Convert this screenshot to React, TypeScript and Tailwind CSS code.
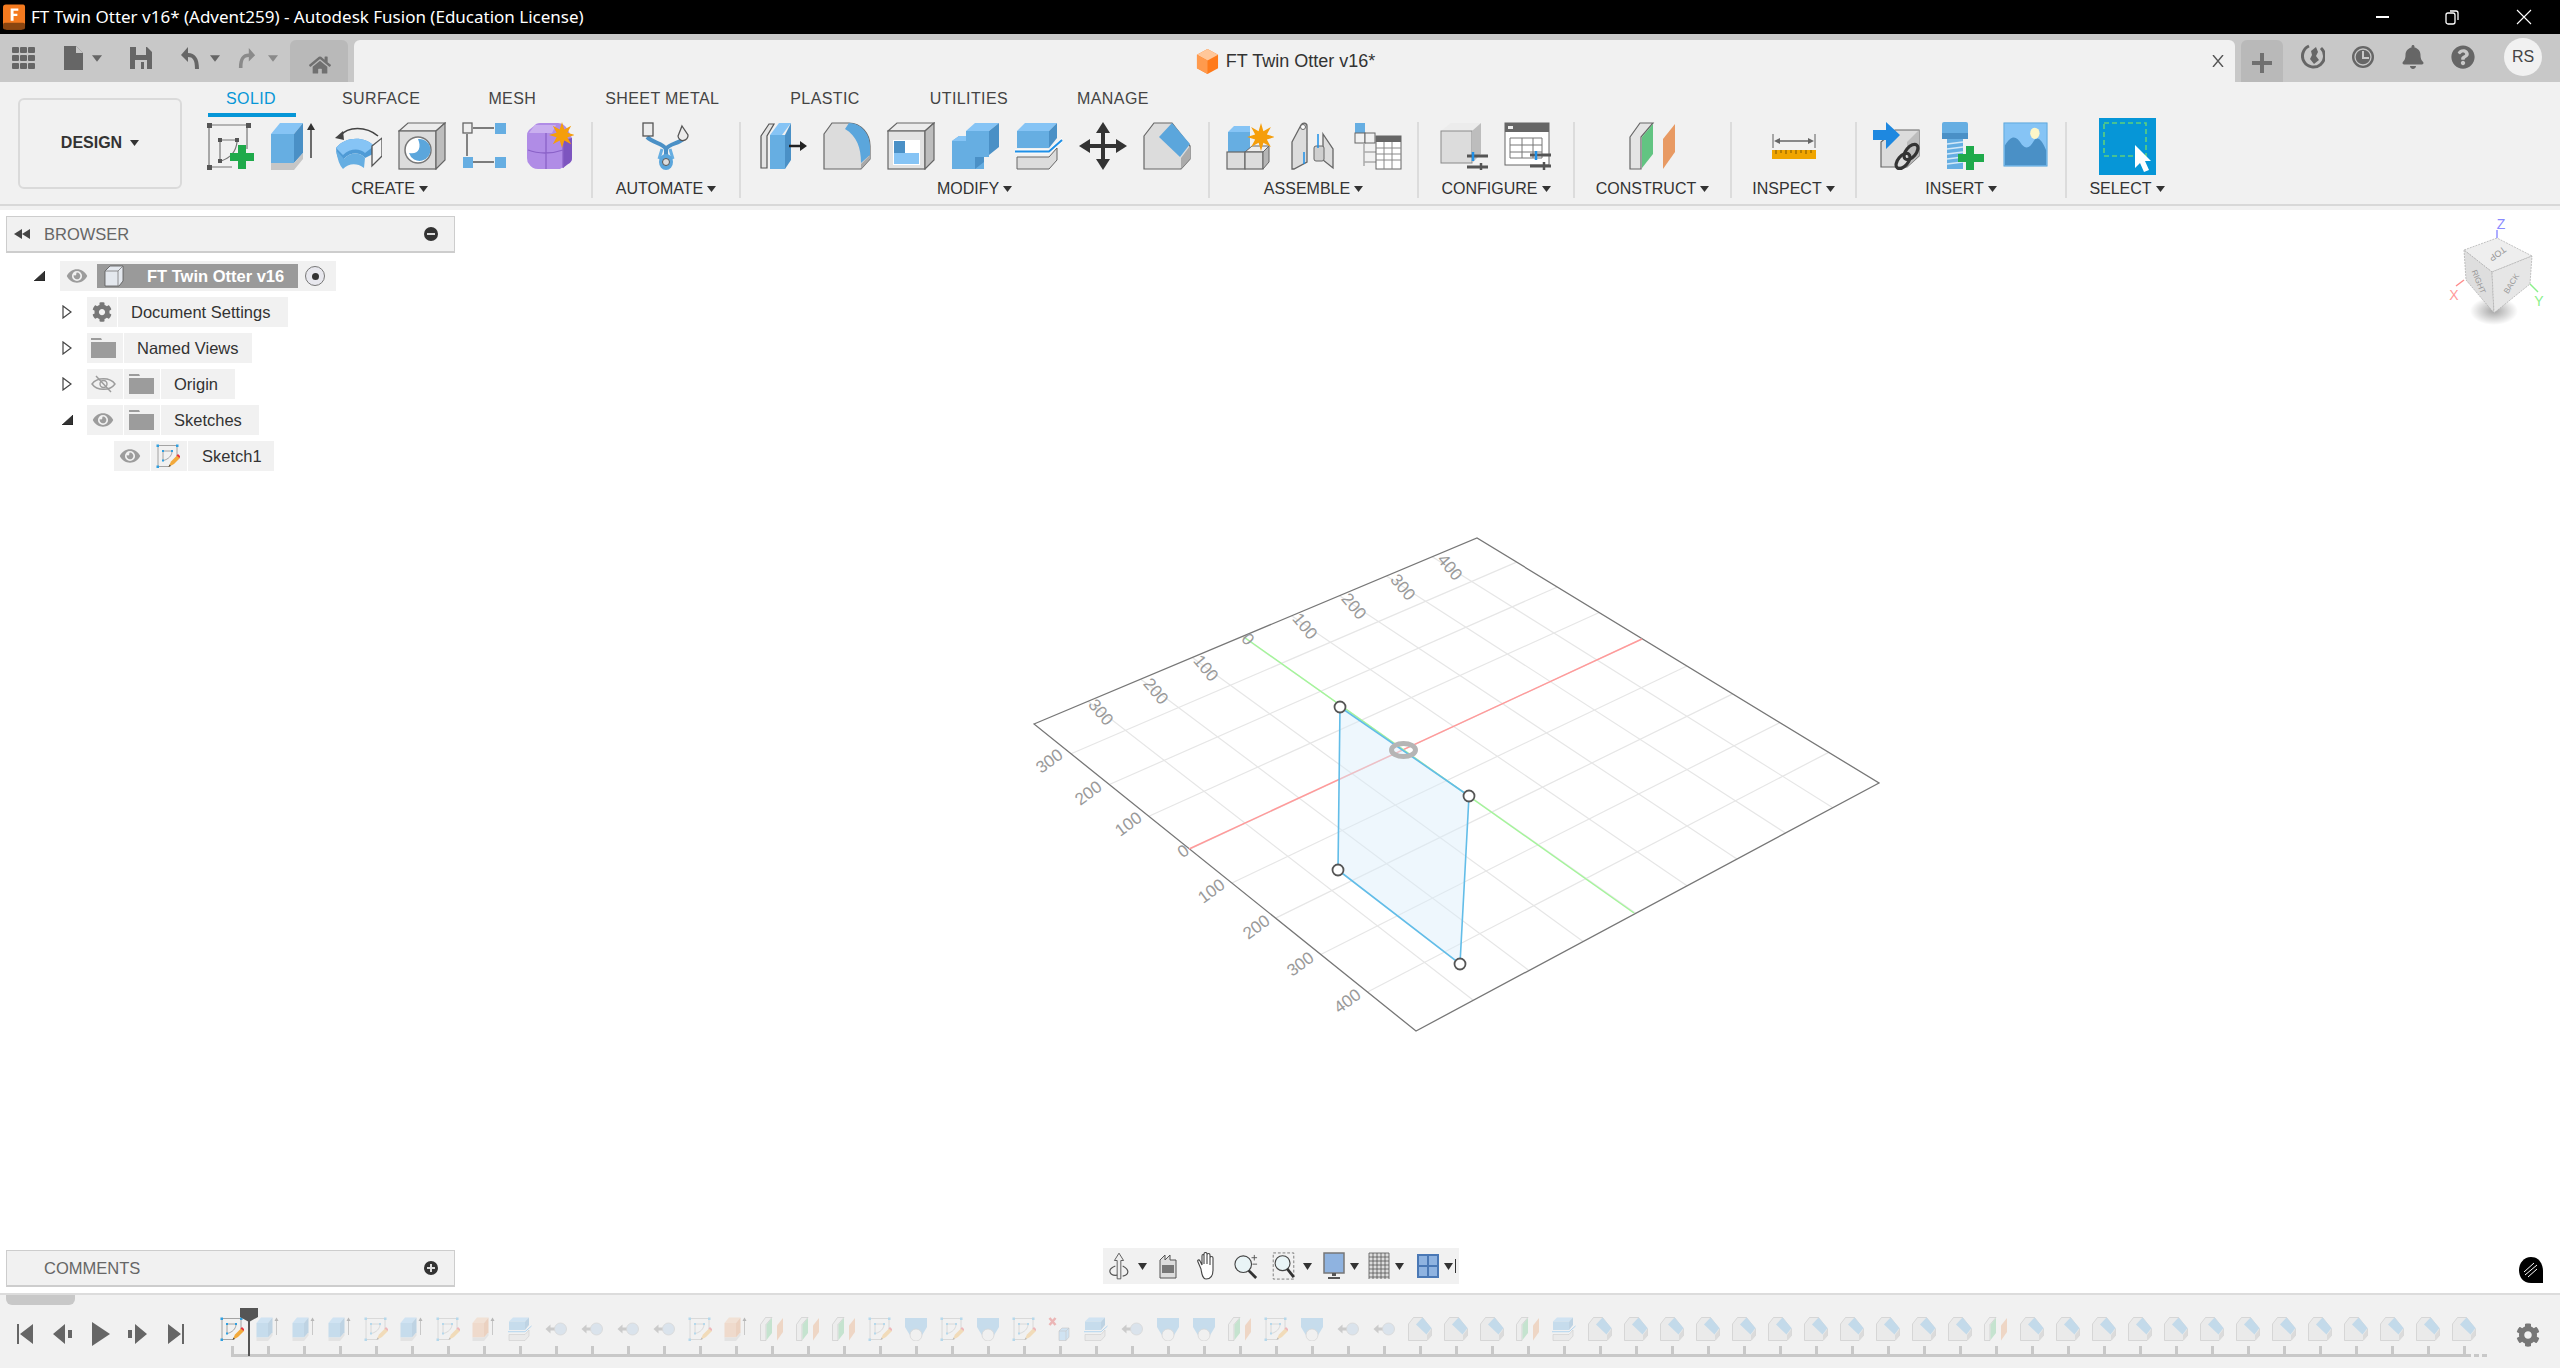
import type { ReactNode } from "react"
import { FaBell, FaCog, FaEye, FaHome, FaQuestionCircle } from "react-icons/fa"

type IconProps = { className?: string }

// all ribbon icons are drawn on a 48 box
function Ico({ className = "w-12 h-12", children }: IconProps & { children: ReactNode }) {
  return (
    <svg viewBox="0 0 48 48" className={className}>
      {children}
    </svg>
  )
}

function Caret() {
  return (
    <svg viewBox="0 0 9 6" className="w-[9px] h-[6px] shrink-0">
      <polygon points="0,0 9,0 4.5,6" fill="#333" />
    </svg>
  )
}

function SketchAdd({ className }: IconProps) {
  return (
    <Ico className={className}>
      <g stroke="#777" strokeWidth="1.2" fill="none">
        <path d="M4 3H41M3 4V44M5 45H26M41 5V27" />
        <path d="M14 18H31M14 20V38M31 20C30 30 24 36 15 39" />
      </g>
      <g fill="#555">
        <rect x="1" y="1" width="5" height="5" />
        <rect x="40" y="1" width="5" height="5" />
        <rect x="1" y="43" width="5" height="5" />
        <rect x="12" y="16" width="4" height="4" />
        <rect x="29" y="16" width="4" height="4" />
        <rect x="12" y="37" width="4" height="4" />
      </g>
      <path d="M33 26h8v8h8v8h-8v8h-8v-8h-8v-8h8z" fill="#1faa4b" transform="translate(-1 -3)" />
    </Ico>
  )
}

function SketchPencil({ className }: IconProps) {
  return (
    <Ico className={className}>
      <g stroke="#8a8a8a" strokeWidth="1.5" fill="none">
        <path d="M5 3H42M4 4V44M5 45H26M42 5V26" />
        <path d="M14 14H32M14 16V32M32 16C31 24 25 30 15 33" />
      </g>
      <g fill="#2f9fe0">
        <rect x="1" y="1" width="5" height="5" />
        <rect x="40" y="1" width="5" height="5" />
        <rect x="1" y="43" width="5" height="5" />
        <rect x="12" y="12" width="4" height="4" />
        <rect x="30" y="12" width="4" height="4" />
        <rect x="12" y="31" width="4" height="4" />
      </g>
      <path d="M25 46l5-11 12-12 6 5-12 12z" fill="#f2a93b" />
      <path d="M41 23l3-3 5 5-2 3z" fill="#e8323c" />
      <path d="M25 46l2-5 3 3z" fill="#444" />
    </Ico>
  )
}

function Extrude({ className, front = "#66aee2", top = "#86c4f5", side = "#4a90c6" }: IconProps & { front?: string; top?: string; side?: string }) {
  return (
    <Ico className={className}>
      <polygon points="1,12 24,12 33,1 10,1" fill={top} />
      <rect x="1" y="12" width="23" height="29" fill={front} />
      <polygon points="24,12 33,1 33,31 24,41" fill={side} />
      <polygon points="1,41 24,41 33,31 33,37 24,48 1,48" fill="#c6c6c6" />
      <path d="M41 36V5" stroke="#333" strokeWidth="1.4" />
      <polygon points="41,1 45,8 37,8" fill="#333" />
    </Ico>
  )
}

function Revolve({ className }: IconProps) {
  return (
    <Ico className={className}>
      <path d="M6 14C14 4 32 4 44 14" stroke="#444" strokeWidth="1.6" fill="none" />
      <polygon points="1,16 9,9 10,18" fill="#444" />
      <path d="M2 26C10 15 30 13 40 24L42 20 39 32 31 36C26 30 16 30 10 37 L5 38 Q2 32 2 26z" fill="#4f9bd6" />
      <path d="M2 26C10 15 30 13 40 24L31 31C26 26 16 26 9 33z" fill="#86c4f5" />
      <path d="M10 37C16 30 26 30 31 36L30 46C22 40 14 42 9 47Q4 42 2 28z" fill="#66aee2" />
      <polygon points="38,24 48,16 48,34 38,44" fill="#f4f4f4" stroke="#555" strokeWidth="1.3" />
    </Ico>
  )
}

function Hole({ className }: IconProps) {
  return (
    <Ico className={className}>
      <polygon points="1,9 10,1 47,1 38,9" fill="#ececec" stroke="#666" strokeWidth="1.2" />
      <rect x="1" y="9" width="37" height="38" fill="#dcdcdc" stroke="#666" strokeWidth="1.2" />
      <polygon points="38,9 47,1 47,38 38,47" fill="#bdbdbd" stroke="#666" strokeWidth="1.2" />
      <circle cx="20" cy="28" r="13" fill="#fff" stroke="#777" strokeWidth="1.5" />
      <path d="M20 17A11 11 0 1 1 11 31C20 33 24 26 20 17z" fill="#5ba6dc" />
    </Ico>
  )
}

function Pattern({ className }: IconProps) {
  return (
    <Ico className={className}>
      <path d="M11 6H32M5 12V34M11 40H32" stroke="#555" strokeWidth="1.4" />
      <rect x="1" y="1" width="9" height="10" fill="#eee" stroke="#666" strokeWidth="1.3" />
      <rect x="33" y="1" width="11" height="11" fill="#66aee2" />
      <rect x="1" y="35" width="10" height="11" fill="#66aee2" />
      <rect x="33" y="35" width="11" height="11" fill="#66aee2" />
    </Ico>
  )
}

function Star({ cx, cy, r }: { cx: number; cy: number; r: number }) {
  const pts = Array.from({ length: 16 }, (_, i) => {
    const a = (i * Math.PI) / 8
    const q = i % 2 === 0 ? r : r * 0.45
    return `${cx + q * Math.sin(a)},${cy - q * Math.cos(a)}`
  }).join(" ")
  return <polygon points={pts} fill="#f59e0b" />
}

function Form({ className }: IconProps) {
  return (
    <Ico className={className}>
      <path d="M8 4Q10 1 14 1H32Q38 1 42 8L46 16V36Q46 40 42 42L34 47H12Q6 47 3 42Q1 40 1 36V14Q1 10 3 8z" fill="#b08ce6" />
      <path d="M9 3H30L26 11H3z" fill="#c9afef" />
      <path d="M37 18L46 16V36Q46 40 42 42L37 46z" fill="#7d55bf" />
      <path d="M2 28C12 32 26 32 37 28M20 11V47M37 18V46" stroke="#8a62c8" strokeWidth="1.3" fill="none" />
      <Star cx={36} cy={13} r={13} />
    </Ico>
  )
}

function Automate({ className }: IconProps) {
  return (
    <Ico className={className}>
      <path d="M5 15C12 22 20 20 24 27L24 35M41 17C36 22 28 21 24 27" stroke="#4a90c6" strokeWidth="4" fill="none" />
      <path d="M20 27L17 37M28 27L31 37" stroke="#66aee2" strokeWidth="3" />
      <rect x="1" y="1" width="10" height="13" fill="#ececec" stroke="#555" strokeWidth="1.3" />
      <path d="M40 4L46 13A5 5 0 1 1 36 14z" fill="#ececec" stroke="#555" strokeWidth="1.3" />
      <ellipse cx="24" cy="40" rx="7" ry="8" fill="#5ba6dc" />
      <circle cx="24" cy="40" r="3.5" fill="#ddd" stroke="#555" />
    </Ico>
  )
}

function PressPull({ className }: IconProps) {
  return (
    <Ico className={className}>
      <polygon points="2,14 10,2 15,2 8,14 8,46 2,46" fill="#e4e4e4" stroke="#555" strokeWidth="1.2" />
      <polygon points="11,13 20,1 32,1 23,13" fill="#86c4f5" />
      <rect x="11" y="13" width="15" height="34" fill="#66aee2" />
      <polygon points="26,13 32,1 32,38 26,47" fill="#4a90c6" />
      <path d="M30 24H43" stroke="#222" strokeWidth="2.5" />
      <polygon points="48,24 41,19 41,29" fill="#222" />
    </Ico>
  )
}

function Fillet({ className }: IconProps) {
  return (
    <Ico className={className}>
      <path d="M1 12L9 1H26C38 1 47 12 47 24V37L38 47H1z" fill="#dcdcdc" stroke="#666" strokeWidth="1.2" />
      <path d="M26 1C38 1 47 12 47 24V33L38 41C38 26 34 14 22 7z" fill="#5ba6dc" />
      <path d="M38 42L47 33V37L38 47z" fill="#a9a9a9" />
    </Ico>
  )
}

function Shell({ className }: IconProps) {
  return (
    <Ico className={className}>
      <polygon points="1,9 10,1 47,1 38,9" fill="#ececec" stroke="#666" strokeWidth="1.2" />
      <rect x="1" y="9" width="37" height="38" fill="#e2e2e2" stroke="#666" strokeWidth="1.2" />
      <polygon points="38,9 47,1 47,38 38,47" fill="#bdbdbd" stroke="#666" strokeWidth="1.2" />
      <rect x="6" y="18" width="27" height="25" fill="#fff" />
      <rect x="7" y="19" width="11" height="23" fill="#4a90c6" />
      <rect x="7" y="31" width="25" height="11" fill="#86c4f5" />
    </Ico>
  )
}

function Combine({ className }: IconProps) {
  return (
    <Ico className={className}>
      <polygon points="1,19 8,14 24,14 24,47 1,47" fill="#66aee2" />
      <polygon points="1,19 8,14 18,14 15,19" fill="#86c4f5" />
      <polygon points="15,9 24,1 48,1 38,9" fill="#86c4f5" />
      <rect x="15" y="9" width="23" height="26" fill="#66aee2" />
      <rect x="15" y="30" width="18" height="17" fill="#66aee2" />
      <polygon points="38,9 48,1 48,25 38,33" fill="#4a90c6" />
      <polygon points="24,35 33,35 33,40 24,47" fill="#4a90c6" />
    </Ico>
  )
}

function Split({ className }: IconProps) {
  return (
    <Ico className={className}>
      <polygon points="2,9 10,1 42,1 34,9" fill="#86c4f5" />
      <rect x="2" y="9" width="32" height="17" fill="#66aee2" />
      <polygon points="34,9 42,1 42,16 34,26" fill="#4a90c6" />
      <path d="M0 28H34L47 16M0 31H34L47 20" stroke="#fff" strokeWidth="1" fill="none" />
      <path d="M0 29.5H34L47 18" stroke="#1e90e8" strokeWidth="2" fill="none" />
      <polygon points="2,35 34,35 42,26 42,38 34,47 2,47" fill="#dcdcdc" stroke="#666" strokeWidth="1" />
    </Ico>
  )
}

function Move({ className }: IconProps) {
  return (
    <Ico className={className}>
      <path d="M24 6V42M6 24H42" stroke="#333" strokeWidth="4" />
      <polygon points="24,0 31,11 17,11" fill="#333" />
      <polygon points="24,48 31,37 17,37" fill="#333" />
      <polygon points="0,24 11,17 11,31" fill="#333" />
      <polygon points="48,24 37,17 37,31" fill="#333" />
    </Ico>
  )
}

function Chamfer({ className }: IconProps) {
  return (
    <Ico className={className}>
      <polygon points="1,14 11,1 29,1 47,24 47,37 38,47 1,47" fill="#dcdcdc" stroke="#666" strokeWidth="1.2" />
      <polygon points="38,36 47,24 47,37 38,47" fill="#ababab" />
      <polygon points="16,15 29,1 47,22 37,35" fill="#5ba6dc" />
    </Ico>
  )
}

function NewComponent({ className }: IconProps) {
  return (
    <Ico className={className}>
      <polygon points="2,10 8,4 24,4 24,10" fill="#86c4f5" />
      <rect x="2" y="10" width="22" height="20" fill="#66aee2" />
      <rect x="1" y="30" width="18" height="17" fill="#dcdcdc" stroke="#666" strokeWidth="1.2" />
      <polygon points="19,30 26,24 43,24 37,30" fill="#eee" stroke="#666" />
      <rect x="19" y="30" width="18" height="17" fill="#dcdcdc" stroke="#666" strokeWidth="1.2" />
      <polygon points="37,30 43,24 43,40 37,47" fill="#b5b5b5" stroke="#666" />
      <Star cx={35} cy={15} r={14} />
    </Ico>
  )
}

function Joint({ className }: IconProps) {
  return (
    <Ico className={className}>
      <path d="M2 20L11 3C13 0 17 1 17 4V40L4 47H2z" fill="#dcdcdc" stroke="#666" strokeWidth="1.3" />
      <path d="M33 12L43 27V46L33 38z" fill="#dcdcdc" stroke="#666" strokeWidth="1.3" />
      <rect x="24" y="24" width="10" height="15" rx="2" fill="#cfcfcf" stroke="#666" />
      <circle cx="13" cy="5" r="2.5" fill="#fff" stroke="#666" />
      <path d="M28 12V26M14 30V42" stroke="#1e90e8" strokeWidth="1.5" />
    </Ico>
  )
}

function Bom({ className }: IconProps) {
  return (
    <Ico className={className}>
      <rect x="1" y="1" width="10" height="10" fill="#66aee2" />
      <rect x="1" y="11" width="10" height="10" fill="#f1f1f1" stroke="#666" />
      <rect x="11" y="11" width="10" height="10" fill="#f1f1f1" stroke="#666" />
      <path d="M10 21V44M10 30H22M10 40H22" stroke="#aaa" strokeWidth="1.5" fill="none" />
      <rect x="22" y="14" width="25" height="33" fill="#fff" stroke="#666" />
      <rect x="22" y="14" width="25" height="6" fill="#666" />
      <path d="M22 26H47M22 32H47M22 38H47M30 20V47M38 20V47" stroke="#888" strokeWidth="1" />
    </Ico>
  )
}

function Sliders({ x, y }: { x: number; y: number }) {
  return (
    <g transform={`translate(${x} ${y})`}>
      <path d="M0 4H21M0 15H21" stroke="#555" strokeWidth="3" />
      <path d="M6 0V9" stroke="#1e90e8" strokeWidth="2.5" />
      <path d="M14 11V20" stroke="#555" strokeWidth="2.5" />
    </g>
  )
}

function ConfigureBox({ className }: IconProps) {
  return (
    <Ico className={className}>
      <polygon points="1,9 11,1 41,1 41,9" fill="#ececec" />
      <rect x="1" y="9" width="31" height="32" fill="#dcdcdc" stroke="#8a8a8a" />
      <polygon points="32,9 41,1 41,32 32,41" fill="#bdbdbd" />
      <Sliders x={27} y={30} />
    </Ico>
  )
}

function ConfigureTable({ className }: IconProps) {
  return (
    <Ico className={className}>
      <rect x="1" y="1" width="44" height="42" fill="#fff" stroke="#666" />
      <rect x="1" y="1" width="44" height="9" fill="#666" />
      <rect x="4" y="4" width="5" height="3" fill="#eee" />
      <path d="M6 16H38V36H6zM6 23H38M6 30H38M18 16V36M29 16V36" stroke="#777" fill="none" />
      <Sliders x={26} y={29} />
    </Ico>
  )
}

function Plane({ className }: IconProps) {
  return (
    <Ico className={className}>
      <polygon points="1,15 11,1 24,1 12,15 12,47 1,47" fill="#e4e4e4" stroke="#666" strokeWidth="1.2" />
      <polygon points="13,15 24,2 24,32 13,46" fill="#62c482" />
      <polygon points="34,17 46,2 46,30 34,47" fill="#e89a63" />
    </Ico>
  )
}

function Measure({ className }: IconProps) {
  return (
    <svg viewBox="0 0 44 26" className={className}>
      <path d="M1 0V14M43 0V14" stroke="#777" strokeWidth="1.2" />
      <path d="M5 7H39" stroke="#666" strokeWidth="1.4" />
      <polygon points="2,7 8,4 8,10" fill="#666" />
      <polygon points="42,7 36,4 36,10" fill="#666" />
      <rect x="0" y="16" width="44" height="9" fill="#f0a500" />
      <path d="M4 16v4M9 16v3M14 16v4M19 16v3M24 16v4M29 16v3M34 16v4M39 16v3" stroke="#7a5200" strokeWidth="1" />
    </svg>
  )
}

function Derive({ className }: IconProps) {
  return (
    <Ico className={className}>
      <polygon points="8,20 8,45 34,45 46,34 46,8 22,8" fill="#dcdcdc" stroke="#666" strokeWidth="1.2" />
      <polygon points="34,20 46,8 46,34 34,45" fill="#bdbdbd" />
      <polygon points="0,8 13,8 13,0 27,13 13,27 13,18 0,18" fill="#1e88e0" />
      <g fill="none" stroke="#333" strokeWidth="3.2">
        <ellipse cx="38" cy="30" rx="5" ry="9" transform="rotate(40 38 30)" />
        <ellipse cx="30" cy="39" rx="5" ry="9" transform="rotate(40 30 39)" />
      </g>
    </Ico>
  )
}

function Bolt({ className }: IconProps) {
  return (
    <Ico className={className}>
      <rect x="5" y="0" width="26" height="17" rx="2" fill="#66aee2" />
      <rect x="5" y="11" width="26" height="6" fill="#4a90c6" />
      <rect x="10" y="17" width="16" height="30" fill="#66aee2" />
      <path d="M10 22L26 20M10 27L26 25M10 32L26 30M10 37L26 35M10 42L26 40" stroke="#d3e9f8" strokeWidth="1.5" />
      <path d="M29 24h8v8h10v8h-10v8h-8v-8h-8v-8h8z" fill="#1faa4b" />
    </Ico>
  )
}

function ImageIcon({ className }: IconProps) {
  return (
    <Ico className={className}>
      <rect x="1" y="1" width="46" height="46" fill="#86c4f5" stroke="#5ba6dc" />
      <path d="M2 46V25C9 14 14 14 20 24C25 30 29 27 33 20C37 14 42 20 46 30V46z" fill="#4a90c6" />
      <ellipse cx="34" cy="12" rx="5" ry="6" fill="#fdf6c8" />
    </Ico>
  )
}

function SelectIcon({ className }: IconProps) {
  return (
    <svg viewBox="0 0 57 57" className={className}>
      <rect width="57" height="57" fill="#0696d7" />
      <rect x="5" y="5" width="42" height="33" fill="none" stroke="#5fd07c" strokeWidth="1.6" strokeDasharray="5 3" />
      <path d="M36 27V50L41 45 45 54 50 52 46 43H52z" fill="#fff" />
    </svg>
  )
}

function ArrowCircle({ className }: IconProps) {
  return (
    <Ico className={className}>
      <polygon points="3,24 13,15 13,21 25,21 25,27 13,27 13,33" fill="#777" />
      <circle cx="33" cy="24" r="12" fill="#a8c6e3" stroke="#999" strokeWidth="1.5" />
    </Ico>
  )
}

function Loft({ className }: IconProps) {
  return (
    <Ico className={className}>
      <polygon points="2,2 46,2 46,20 34,40 14,40 2,20" fill="#66aee2" />
      <ellipse cx="24" cy="36" rx="12" ry="12" fill="#eee" stroke="#999" strokeWidth="1.5" />
    </Ico>
  )
}

function DeleteBody({ className }: IconProps) {
  return (
    <Ico className={className}>
      <path d="M3 2L15 16M15 2L3 16" stroke="#e03030" strokeWidth="5" />
      <polygon points="22,28 28,22 42,22 42,40 36,47 22,47" fill="#86c4f5" stroke="#666" strokeWidth="1.2" />
      <path d="M22 28H36V47M36 28L42 22" stroke="#666" strokeWidth="1.2" fill="none" />
    </Ico>
  )
}

const OrangeExtrude = ({ className }: IconProps) => (
  <Extrude className={className} front="#eda878" top="#f2bd96" side="#e08b52" />
)

const toolGroups: { label: string; width: string; icons: ((p: IconProps) => ReactNode)[] }[] = [
  { label: "CREATE", width: "w-[403px]", icons: [SketchAdd, Extrude, Revolve, Hole, Pattern, Form] },
  { label: "AUTOMATE", width: "w-[148px]", icons: [Automate] },
  { label: "MODIFY", width: "w-[469px]", icons: [PressPull, Fillet, Shell, Combine, Split, Move, Chamfer] },
  { label: "ASSEMBLE", width: "w-[209px]", icons: [NewComponent, Joint, Bom] },
  { label: "CONFIGURE", width: "w-[156px]", icons: [ConfigureBox, ConfigureTable] },
  { label: "CONSTRUCT", width: "w-[157px]", icons: [Plane] },
]

const tabs = [
  { name: "SOLID", cls: "relative text-[#0696d7]" },
  { name: "SURFACE", cls: "-ml-[3px]" },
  { name: "MESH", cls: "-ml-px" },
  { name: "SHEET METAL", cls: "" },
  { name: "PLASTIC", cls: "ml-[2px]" },
  { name: "UTILITIES", cls: "ml-px" },
  { name: "MANAGE", cls: "" },
]

function ToolGroup({ label, width, first, children }: { label: string; width: string; first?: boolean; children: ReactNode }) {
  return (
    <div className={`${width} h-[76px] flex flex-col items-center shrink-0 ${first ? "" : "border-l-2 border-[#dcdcdc]"}`}>
      <div className="h-12 shrink-0 flex items-start justify-center">{children}</div>
      <div className="mt-[9px] h-5 shrink-0 flex items-center gap-1 text-base text-[#333]">
        {label}
        <Caret />
      </div>
    </div>
  )
}

function Ribbon() {
  return (
    <div className="h-[128px] bg-[#f1f1f1] flex shrink-0 border-b-0 relative">
      <div className="ml-[18px] mt-4 w-[164px] h-[91px] pb-[2px] rounded-md border-2 border-[#dadada] flex items-center justify-center gap-2 text-base font-bold text-[#333]">
        DESIGN
        <Caret />
      </div>
      <div className="ml-[6px] flex flex-col">
        <div className="h-9 flex items-start gap-[69px] pl-[38px] pt-[7px] text-base leading-5 tracking-[0.4px] text-[#444]">
          {tabs.map((t, i) => (
            <div key={t.name} className={t.cls}>
              {t.name}
              {i === 0 && <div className="absolute left-[-18px] right-[-20px] top-[24px] h-1 bg-[#0696d7]" />}
            </div>
          ))}
        </div>
        <div className="mt-1 flex">
          {toolGroups.map((g, i) => (
            <ToolGroup key={g.label} label={g.label} width={g.width} first={i === 0}>
              {g.icons.map((Icon, n) => (
                <div key={n} className="w-16 flex justify-center">
                  <Icon className="w-12 h-12" />
                </div>
              ))}
            </ToolGroup>
          ))}
          <ToolGroup label="INSPECT" width="w-[125px]">
            <div className="mt-3">
              <Measure className="w-[44px] h-[26px]" />
            </div>
          </ToolGroup>
          <ToolGroup label="INSERT" width="w-[210px]">
            <div className="w-16 flex justify-center">
              <Derive className="w-12 h-12" />
            </div>
            <div className="w-16 flex justify-center">
              <Bolt className="w-12 h-12" />
            </div>
            <div className="w-16 flex justify-center">
              <ImageIcon className="w-[45px] h-[45px]" />
            </div>
          </ToolGroup>
          <ToolGroup label="SELECT" width="w-[122px]">
            <SelectIcon className="w-[57px] h-[57px] -mt-1" />
          </ToolGroup>
        </div>
      </div>
      <div className="absolute left-0 right-0 top-[122px] h-0.5 bg-[#d8d8d8]" />
    </div>
  )
}

function TitleBar() {
  return (
    <div className="h-[34px] bg-black flex items-center text-white shrink-0 relative">
      <svg viewBox="0 0 24 26" className="ml-[3px] w-[23px] h-[26px]">
        <path d="M3 0H21Q23 0 23 3V22Q23 26 19 26H4Q0 26 0 22V3Q0 0 3 0z" fill="#f47a1f" />
        <rect x="0" y="19" width="23" height="7" rx="2" fill="#8a4510" />
        <path d="M8 4H16V6.5H11V9.5H15V12H11V17H8z" fill="#fff" />
      </svg>
      <span className="ml-[5px] text-[17px] font-['Noto_Sans',sans-serif]">
        FT Twin Otter v16* (Advent259) - Autodesk Fusion (Education License)
      </span>
      <div className="ml-auto flex items-center">
        <div className="w-[13px] h-[1.5px] bg-white mr-[55px]" />
        <svg viewBox="0 0 16 16" className="w-4 h-[20px] mr-[56px]">
          <rect x="2" y="4" width="9" height="11" rx="2" fill="none" stroke="#fff" strokeWidth="1.3" />
          <path d="M6 2H12Q14 2 14 4V11" fill="none" stroke="#fff" strokeWidth="1.3" />
        </svg>
        <svg viewBox="0 0 16 16" className="w-4 h-4 mr-[28px]">
          <path d="M1 1L15 15M15 1L1 15" stroke="#fff" strokeWidth="1.1" />
        </svg>
      </div>
    </div>
  )
}

function QuickAccess() {
  return (
    <div className="w-[354px] flex shrink-0 relative">
      <div className="w-[290px] h-12 flex items-center text-[#666]">
        <svg viewBox="0 0 24 22" className="ml-3 w-6 h-[22px]">
          {[0, 8, 16].flatMap((y) =>
            [0, 8, 16].map((x) => <rect key={`${x}-${y}`} x={x} y={y} width="7" height="6" rx="1" fill="#666" />)
          )}
        </svg>
        <svg viewBox="0 0 20 24" className="ml-[27px] w-5 h-6">
          <path d="M1 0H13L20 7V24H1z" fill="#666" />
          <path d="M13 0V7H20z" fill="#c8c8c8" />
        </svg>
        <div className="ml-[9px]">
          <svg viewBox="0 0 9 6" className="w-[10px] h-[7px]">
            <polygon points="0,0 9,0 4.5,6" fill="#666" />
          </svg>
        </div>
        <svg viewBox="0 0 22 24" className="ml-[28px] w-[22px] h-6">
          <path d="M0 1H17L22 6V23H0z" fill="#666" />
          <rect x="6" y="1" width="10" height="8" fill="#c8c8c8" />
          <rect x="5" y="14" width="12" height="9" fill="#c8c8c8" />
          <rect x="11" y="16" width="3" height="7" fill="#666" />
        </svg>
        <svg viewBox="0 0 20 24" className="ml-[28px] w-5 h-6">
          <path d="M8 1L1 9L8 16V11C13 11 15 14 15 23H19C19 12 15 7 8 7z" fill="#666" />
        </svg>
        <div className="ml-[10px]">
          <svg viewBox="0 0 9 6" className="w-[10px] h-[7px]">
            <polygon points="0,0 9,0 4.5,6" fill="#666" />
          </svg>
        </div>
        <svg viewBox="0 0 20 24" className="ml-[18px] w-[18px] h-6 -scale-x-100">
          <path d="M8 1L1 9L8 16V11C13 11 15 14 15 23H19C19 12 15 7 8 7z" fill="#8a8a8a" />
        </svg>
        <div className="ml-[12px]">
          <svg viewBox="0 0 9 6" className="w-[10px] h-[7px]">
            <polygon points="0,0 9,0 4.5,6" fill="#8a8a8a" />
          </svg>
        </div>
      </div>
      <div className="w-[58px] h-[42px] mt-[6px] bg-[#b9b9b9] rounded-t-md flex items-center justify-center">
        <FaHome className="w-[22px] h-[22px] mt-2 ml-[2px] text-[#707070]" />
      </div>
    </div>
  )
}

function TabBar() {
  return (
    <div className="h-12 bg-[#c8c8c8] flex shrink-0 text-[#666]">
      <QuickAccess />
      <div className="mt-[6px] w-[1881px] h-[42px] bg-[#f1f1f1] rounded-t-md flex items-center justify-center relative">
        <div className="flex items-center gap-[7px] ml-[-18px] text-[18px] text-[#333]">
          <svg viewBox="0 0 24 26" className="w-[23px] h-[25px]">
            <polygon points="12,0 23,6 23,20 12,26 1,20 1,6" fill="#ff7a1a" />
            <polygon points="12,0 23,6 12,12 1,6" fill="#ffc79a" />
            <polygon points="1,6 12,12 12,26 1,20" fill="#ff9a4d" />
          </svg>
          FT Twin Otter v16*
        </div>
        <svg viewBox="0 0 12 12" className="absolute right-[11px] top-[15px] w-3 h-3">
          <path d="M1 0L11 12M11 0L1 12" stroke="#555" strokeWidth="1.4" />
        </svg>
      </div>
      <div className="ml-[6px] mt-[6px] w-[42px] h-[42px] bg-[#b9b9b9] rounded-t-md flex items-center justify-center">
        <svg viewBox="0 0 20 20" className="w-5 h-5 mt-1">
          <path d="M10 0V20M0 10H20" stroke="#707070" strokeWidth="4" />
        </svg>
      </div>
      <div className="flex items-center h-[46px] ml-[18px] gap-[26px]">
        <svg viewBox="0 0 24 28" className="w-6 h-7">
          <path d="M8 3A11 11 0 1 0 20 5" fill="none" stroke="#666" strokeWidth="3" />
          <path d="M10 8L15 4 17 9 15 13 18 17 13 21 9 16 11 12z" fill="#666" />
        </svg>
        <svg viewBox="0 0 24 24" className="w-6 h-6">
          <circle cx="12" cy="12" r="11" fill="#666" />
          <circle cx="12" cy="12" r="8" fill="none" stroke="#c8c8c8" strokeWidth="1.3" />
          <path d="M12 6V13H18" fill="none" stroke="#c8c8c8" strokeWidth="2" />
        </svg>
        <FaBell className="w-6 h-6 text-[#666]" />
        <FaQuestionCircle className="w-6 h-6 text-[#666]" />
        <div className="ml-[3px] w-[38px] h-[38px] rounded-full bg-[#f1f1f1] flex items-center justify-center text-base text-[#444]">
          RS
        </div>
      </div>
    </div>
  )
}

function Eye() {
  return <FaEye className="w-6 h-[18px] text-[#9c9c9c]" />
}

function EyeOff() {
  return (
    <svg viewBox="0 0 25 18" className="w-[25px] h-[18px]">
      <path d="M1 9C6 2 19 2 24 9C19 16 6 16 1 9z" fill="none" stroke="#9c9c9c" strokeWidth="1.4" />
      <circle cx="12.5" cy="9" r="3.5" fill="none" stroke="#9c9c9c" strokeWidth="1.4" />
      <path d="M5 1L20 17" stroke="#9c9c9c" strokeWidth="1.4" />
    </svg>
  )
}

function Folder() {
  return (
    <svg viewBox="0 0 25 20" className="w-[25px] h-5">
      <path d="M0 0H10L11 2H0zM0 4H25V20H0z" fill="#9c9c9c" />
    </svg>
  )
}

function Expander({ open }: { open?: boolean }) {
  return open ? (
    <svg viewBox="0 0 11 10" className="w-[11px] h-[10px]">
      <polygon points="0,10 11,0 11,10" fill="#333" stroke="#111" strokeWidth="0.6" />
    </svg>
  ) : (
    <svg viewBox="0 0 10 14" className="w-[10px] h-[14px]">
      <polygon points="1,1 9,7 1,13" fill="#fff" stroke="#444" strokeWidth="1.2" />
    </svg>
  )
}

function TreeRow({
  indent,
  expander,
  width,
  labelPad,
  icons,
  label,
  firstCell = "w-[37px]",
}: {
  indent: string
  expander?: ReactNode
  width: string
  labelPad: string
  icons: ReactNode[]
  label: string
  firstCell?: string
}) {
  return (
    <div className="flex items-center h-[30px] mb-[6px] relative">
      {expander && <div className="absolute left-[62px] flex items-center">{expander}</div>}
      <div className={`${indent} ${width} h-[30px] bg-[#f1f1f1] flex items-center`}>
        {icons.map((ic, i) => (
          <div
            key={i}
            className={`h-full flex items-center border-r border-white ${i === 0 ? `pl-1 ${firstCell}` : "pl-[5px] w-[37px]"}`}
          >
            {ic}
          </div>
        ))}
        <span className={`${labelPad} text-[16.5px] text-[#333] whitespace-nowrap`}>{label}</span>
      </div>
    </div>
  )
}

function Browser() {
  return (
    <div className="absolute left-[6px] top-[6px]">
      <div className="w-[449px] h-[37px] bg-[#f1f1f1] border border-[#cdcdcd] border-b-2 flex items-center">
        <svg viewBox="0 0 16 10" className="ml-[7px] w-4 h-[10px]">
          <polygon points="0,5 8,0 8,10" fill="#444" />
          <polygon points="8,5 16,0 16,10" fill="#444" />
        </svg>
        <span className="ml-[14px] text-[16.5px] text-[#666]">BROWSER</span>
        <svg viewBox="0 0 14 14" className="ml-auto mr-4 w-[14px] h-[14px]">
          <circle cx="7" cy="7" r="7" fill="#333" />
          <rect x="3" y="6" width="8" height="2" fill="#ddd" />
        </svg>
      </div>
      <div className="mt-2 -ml-[6px] relative">
        <div className="flex items-center h-[30px] mb-[6px]">
          <div className="absolute left-[34px] flex items-center">
            <Expander open />
          </div>
          <div className="ml-[60px] w-[276px] h-[30px] bg-[#f1f1f1] flex items-center">
            <div className="w-[37px] pl-[5px] flex">
              <Eye />
            </div>
            <div className="w-[201px] h-6 bg-[#9a9a9a] flex items-center">
              <svg viewBox="0 0 22 22" className="ml-[6px] w-[22px] h-[22px]">
                <path d="M2 6L7 1H20V16L16 21H2z" fill="#e4e8ee" stroke="#555" strokeWidth="0.8" />
                <path d="M2 6H15V21M15 6L20 1" fill="none" stroke="#777" strokeWidth="0.8" />
              </svg>
              <span className="ml-[22px] text-[16.5px] font-bold text-white whitespace-nowrap">FT Twin Otter v16</span>
            </div>
            <div className="ml-auto mr-[11px] w-5 h-5 rounded-full border border-[#777] bg-[#e8e8ee] flex items-center justify-center">
              <div className="w-[7px] h-[7px] rounded-full bg-[#333]" />
            </div>
          </div>
        </div>
        <TreeRow indent="ml-[87px]" expander={<Expander />} width="w-[201px]" labelPad="ml-[13px]" firstCell="w-[31px]" icons={[<FaCog key="g" className="w-5 h-5 ml-[1px] text-[#777]" />]} label="Document Settings" />
        <TreeRow indent="ml-[87px]" expander={<Expander />} width="w-[165px]" labelPad="ml-[13px]" icons={[<Folder key="f" />]} label="Named Views" />
        <TreeRow indent="ml-[87px]" expander={<Expander />} width="w-[148px]" labelPad="ml-[13px]" icons={[<EyeOff key="e" />, <Folder key="f" />]} label="Origin" />
        <TreeRow indent="ml-[87px]" expander={<Expander open />} width="w-[172px]" labelPad="ml-[13px]" icons={[<Eye key="e" />, <Folder key="f" />]} label="Sketches" />
        <TreeRow indent="ml-[114px]" width="w-[160px]" labelPad="ml-[14px]" icons={[<Eye key="e" />, <SketchPencil key="s" className="w-6 h-6" />]} label="Sketch1" />
      </div>
    </div>
  )
}

type Pt = [number, number]

// maps the unit square onto the sketch plane as seen in perspective
function makeProjection(p0: Pt, p1: Pt, p2: Pt, p3: Pt) {
  const dx1 = p1[0] - p2[0]
  const dx2 = p3[0] - p2[0]
  const dy1 = p1[1] - p2[1]
  const dy2 = p3[1] - p2[1]
  const sx = p0[0] - p1[0] + p2[0] - p3[0]
  const sy = p0[1] - p1[1] + p2[1] - p3[1]
  const den = dx1 * dy2 - dx2 * dy1
  const g = (sx * dy2 - dx2 * sy) / den
  const h = (dx1 * sy - sx * dy1) / den
  const a = p1[0] - p0[0] + g * p1[0]
  const b = p3[0] - p0[0] + h * p3[0]
  const d = p1[1] - p0[1] + g * p1[1]
  const e = p3[1] - p0[1] + h * p3[1]
  return (u: number, v: number): Pt => {
    const w = g * u + h * v + 1
    return [(a * u + b * v + p0[0]) / w, (d * u + e * v + p0[1]) / w]
  }
}

const project = makeProjection([1034, 724], [1477, 538], [1879, 783], [1416, 1031])

const gridLines = Array.from({ length: 8 }, (_, i) => (i + 1) / 9).flatMap((t) => [
  [project(t, 0), project(t, 1)],
  [project(0, t), project(1, t)],
])

const leftLabels: [string, number, number][] = [
  ["300", 1050, 762],
  ["200", 1089, 794],
  ["100", 1129, 825],
  ["0", 1184, 852],
  ["100", 1212, 892],
  ["200", 1257, 928],
  ["300", 1301, 965],
  ["400", 1348, 1002],
]

const topLabels: [string, number, number][] = [
  ["300", 1100, 713],
  ["200", 1155, 692],
  ["100", 1205, 669],
  ["0", 1247, 640],
  ["100", 1304, 627],
  ["200", 1353, 607],
  ["300", 1402, 588],
  ["400", 1449, 568],
]

const sketchPts: Pt[] = [
  [1340, 707],
  [1469, 796],
  [1460, 964],
  [1338, 870],
]

function Scene() {
  return (
    <svg viewBox="0 210 2560 1083" className="absolute inset-0 w-full h-full">
      {gridLines.map(([a, b], i) => (
        <line key={i} x1={a[0]} y1={a[1]} x2={b[0]} y2={b[1]} stroke="#e6e6e6" strokeWidth="1.2" />
      ))}
      <polygon points="1034,724 1477,538 1879,783 1416,1031" fill="none" stroke="#777" strokeWidth="1.3" />
      <line x1="1189" y1="849" x2="1642" y2="639" stroke="#ff9a9a" strokeWidth="1.5" />
      <line x1="1244" y1="637" x2="1634" y2="913" stroke="#a4f59a" strokeWidth="1.5" />
      <polygon points={sketchPts.map((p) => p.join(",")).join(" ")} fill="#d9eefa" fillOpacity="0.45" />
      <polygon points={sketchPts.map((p) => p.join(",")).join(" ")} fill="none" stroke="#62bde8" strokeWidth="1.6" />
      <ellipse cx="1403.5" cy="750" rx="12" ry="6.5" fill="none" stroke="#b5b5b5" strokeWidth="5" />
      {sketchPts.map((p, i) => (
        <circle key={i} cx={p[0]} cy={p[1]} r="5.5" fill="#fff" stroke="#555" strokeWidth="1.8" />
      ))}
      <g fill="#9a9a9a" fontSize="17" fontFamily="Liberation Sans, sans-serif" textAnchor="middle" dominantBaseline="middle">
        {leftLabels.map(([t, x, y], i) => (
          <text key={i} x={x} y={y} transform={`rotate(-36 ${x} ${y})`}>
            {t}
          </text>
        ))}
        {topLabels.map(([t, x, y], i) => (
          <text key={i} x={x} y={y} transform={`rotate(50 ${x} ${y})`}>
            {t}
          </text>
        ))}
      </g>
    </svg>
  )
}

function ViewCube() {
  return (
    <svg viewBox="0 -8 100 118" className="absolute left-[2448px] top-0 w-[100px] h-[118px]">
      <defs>
        <radialGradient id="cubeShadow">
          <stop offset="0" stopColor="#000" stopOpacity="0.35" />
          <stop offset="1" stopColor="#000" stopOpacity="0" />
        </radialGradient>
      </defs>
      <ellipse cx="46" cy="93" rx="24" ry="14" fill="url(#cubeShadow)" />
      <polygon points="49,20 16,32 44,54 84,38" fill="#eeeeee" stroke="#aaa" strokeWidth="0.7" strokeDasharray="2 1" />
      <polygon points="16,32 18,62 46,95 44,54" fill="#dedede" stroke="#aaa" strokeWidth="0.7" strokeDasharray="2 1" />
      <polygon points="44,54 84,38 82,66 46,95" fill="#e6e6e6" stroke="#aaa" strokeWidth="0.7" strokeDasharray="2 1" />
      <path d="M49 20V12" stroke="#8a8aff" strokeWidth="1.4" />
      <path d="M16 62L8 68" stroke="#ff8a8a" strokeWidth="1.4" />
      <path d="M82 66L90 74" stroke="#8af08a" strokeWidth="1.4" />
      <g fontFamily="Liberation Sans, sans-serif" fontSize="9" fill="#999" textAnchor="middle">
        <text x="52" y="34" transform="rotate(145 50 33)">TOP</text>
        <text x="30" y="66" fontSize="8" transform="rotate(68 30 64)">RIGHT</text>
        <text x="64" y="68" fontSize="8" transform="rotate(-58 64 66)">BACK</text>
      </g>
      <g fontFamily="Liberation Sans, sans-serif" fontSize="14">
        <text x="53" y="11" fill="#8a8aff" textAnchor="middle">Z</text>
        <text x="6" y="82" fill="#ff9a9a" textAnchor="middle">X</text>
        <text x="91" y="88" fill="#8af08a" textAnchor="middle">Y</text>
      </g>
    </svg>
  )
}

function NavCaret() {
  return (
    <svg viewBox="0 0 9 7" className="w-[9px] h-[7px] shrink-0">
      <polygon points="0,0 9,0 4.5,7" fill="#333" />
    </svg>
  )
}

function NavBar() {
  return (
    <div className="absolute left-[1103px] top-[1038px] w-[356px] h-9 bg-[#f1f1f1] flex items-center text-[#555]">
      <svg viewBox="0 0 24 30" className="ml-[5px] w-[22px] h-[28px]">
        <path d="M12 1L17 9H14V29H10V9H7z" fill="#eee" stroke="#555" />
        <path d="M8 15C-2 19 2 26 10 25M16 15C24 19 23 25 16 26" fill="none" stroke="#555" strokeWidth="1.3" />
      </svg>
      <div className="ml-2"><NavCaret /></div>
      <svg viewBox="0 0 22 26" className="ml-[10px] w-[22px] h-[26px]">
        <path d="M3 7L8 2V7L13 2V7H19V25H3z" fill="#ddd" stroke="#555" />
        <rect x="5" y="12" width="12" height="8" fill="#777" />
      </svg>
      <svg viewBox="0 0 24 28" className="ml-[16px] w-[24px] h-[28px]">
        <path d="M6 17L3 10C2 8 4 7 5 9L7 13V4C7 2 9 2 9 4V12V2C9 0 12 0 12 2V12V3C12 1 15 1 15 3V13V6C15 4 18 4 18 6V18C18 24 15 27 11 27C8 27 7 24 6 17z" fill="#fff" stroke="#444" strokeWidth="1.1" />
      </svg>
      <svg viewBox="0 0 26 28" className="ml-[15px] w-6 h-[26px]">
        <circle cx="10" cy="12" r="9" fill="#e9f4f6" stroke="#444" strokeWidth="1.2" />
        <path d="M16 19L24 27" stroke="#333" strokeWidth="3" />
        <path d="M22 2V8M19 5H25M20 12H25" stroke="#555" strokeWidth="1" />
      </svg>
      <svg viewBox="0 0 24 30" className="ml-[14px] w-[23px] h-[28px]">
        <rect x="1" y="1" width="22" height="28" fill="none" stroke="#777" strokeDasharray="3 2" />
        <circle cx="11" cy="12" r="8" fill="#e9f4f6" stroke="#444" strokeWidth="1.2" />
        <path d="M16 18L23 27" stroke="#333" strokeWidth="3" />
      </svg>
      <div className="ml-[8px]"><NavCaret /></div>
      <svg viewBox="0 0 22 28" className="ml-[11px] w-[22px] h-[28px]">
        <rect x="1" y="1" width="20" height="20" fill="#8fb3e0" stroke="#777" strokeWidth="1.5" />
        <path d="M9 21H13V24H9zM5 25H17V27H5z" fill="#555" />
      </svg>
      <div className="ml-[5px]"><NavCaret /></div>
      <svg viewBox="0 0 22 28" className="ml-[9px] w-[22px] h-[28px]">
        <rect x="1" y="1" width="20" height="26" fill="#ddd" />
        <path d="M1 1H21M1 5H21M1 9H21M1 13H21M1 17H21M1 21H21M1 25H21M1 1V27M5 1V27M9 1V27M13 1V27M17 1V27M21 1V27" stroke="#555" strokeWidth="0.8" />
      </svg>
      <div className="ml-[5px]"><NavCaret /></div>
      <svg viewBox="0 0 22 24" className="ml-[13px] w-[22px] h-[24px]">
        <rect width="22" height="24" fill="#4a78b5" />
        <rect x="2" y="2" width="8" height="9" fill="#8fb3e0" />
        <rect x="12" y="2" width="8" height="9" fill="#8fb3e0" />
        <rect x="2" y="13" width="8" height="9" fill="#8fb3e0" />
        <rect x="12" y="13" width="8" height="9" fill="#8fb3e0" />
      </svg>
      <div className="ml-[5px]"><NavCaret /></div>
      <div className="ml-[2px] w-px h-[14px] bg-[#333]" />
    </div>
  )
}

type Step = "sk" | "ex" | "or" | "sp" | "ar" | "pl" | "lo" | "de" | "ch"

const stepIcon: Record<Step, (p: IconProps) => ReactNode> = {
  sk: SketchPencil,
  ex: Extrude,
  or: OrangeExtrude,
  sp: Split,
  ar: ArrowCircle,
  pl: Plane,
  lo: Loft,
  de: DeleteBody,
  ch: Chamfer,
}

const steps = (
  "sk ex ex ex sk ex sk or sp ar ar ar ar sk or pl pl pl sk lo sk lo sk de sp ar lo lo pl sk lo ar ar " +
  "ch ch ch pl sp ch ch ch ch ch ch ch ch ch ch ch pl ch ch ch ch ch ch ch ch ch ch ch ch ch"
).split(" ") as Step[]

function Timeline() {
  return (
    <div className="h-[75px] bg-[#f1f1f1] border-t-2 border-[#dcdcdc] shrink-0 flex relative">
      <div className="absolute left-[6px] top-0 w-[69px] h-[10px] rounded-b-md bg-[#c8c8c8]" />
      <div className="w-[214px] pl-[17px] pt-[29px] flex items-start text-[#666] shrink-0">
        <svg viewBox="0 0 16 20" className="w-4 h-5">
          <path d="M0 0H2V20H0zM16 0V20L3 10z" fill="#666" />
        </svg>
        <svg viewBox="0 0 20 20" className="ml-5 w-5 h-5">
          <path d="M12 0V20L0 10zM15 6H19V14H15z" fill="#666" />
        </svg>
        <svg viewBox="0 0 18 24" className="ml-[19px] -mt-[2px] w-[18px] h-6">
          <path d="M0 0L18 12L0 24z" fill="#666" />
        </svg>
        <svg viewBox="0 0 20 20" className="ml-[17px] w-5 h-5">
          <path d="M8 0V20L20 10zM1 6H5V14H1z" fill="#666" />
        </svg>
        <svg viewBox="0 0 16 20" className="ml-[21px] w-4 h-5">
          <path d="M0 0V20L13 10zM14 0H16V20H14z" fill="#666" />
        </svg>
      </div>
      <div className="flex flex-col pt-[22px]">
        <div className="flex">
          {steps.map((s, i) => {
            const Icon = stepIcon[s]
            return (
              <div key={i} className="w-9 flex flex-col items-center shrink-0">
                <div className={i === 0 ? "" : "opacity-30"}>
                  <Icon className="w-6 h-6" />
                </div>
                <div className="mt-[5px] w-[3px] h-2 bg-[#c8c8c8]" />
              </div>
            )
          })}
        </div>
        <div className="flex items-center gap-[3px] ml-[17px]">
          <div className="w-[2240px] h-[3px] bg-[#c8c8c8]" />
          <div className="w-[5px] h-[3px] bg-[#c8c8c8]" />
          <div className="w-[5px] h-[3px] bg-[#c8c8c8]" />
        </div>
      </div>
      <svg viewBox="0 0 18 48" className="absolute left-[240px] top-[13px] w-[18px] h-12">
        <path d="M0 0H18V9L9 14 0 9zM8 10H10V48H8z" fill="#555" />
      </svg>
      <FaCog className="absolute left-[2516px] top-[28px] w-6 h-6 text-[#777]" />
    </div>
  )
}

export default function App() {
  return (
    <div className="w-[2560px] h-[1368px] overflow-hidden flex flex-col bg-white font-['Liberation_Sans',Arial,sans-serif]">
      <TitleBar />
      <TabBar />
      <Ribbon />
      <main className="flex-1 relative bg-white">
        <Scene />
        <Browser />
        <ViewCube />
        <div className="absolute left-[6px] top-[1040px] w-[449px] h-[37px] bg-[#f1f1f1] border border-[#cdcdcd] border-b-2 flex items-center">
          <span className="ml-[37px] text-[16.5px] text-[#666]">COMMENTS</span>
          <svg viewBox="0 0 14 14" className="ml-auto mr-4 w-[14px] h-[14px]">
            <circle cx="7" cy="7" r="7" fill="#333" />
            <path d="M7 3V11M3 7H11" stroke="#ddd" strokeWidth="2" />
          </svg>
        </div>
        <NavBar />
        <svg viewBox="0 0 24 26" className="absolute left-[2519px] top-[1047px] w-6 h-[26px]">
          <path d="M12 0C20 0 24 7 24 14V26H12C4 26 0 20 0 13C0 6 5 0 12 0z" fill="#000" />
          <path d="M5 15L15 6M6 18L18 8M9 20L18 12" stroke="#fff" strokeWidth="1" />
        </svg>
      </main>
      <Timeline />
    </div>
  )
}
